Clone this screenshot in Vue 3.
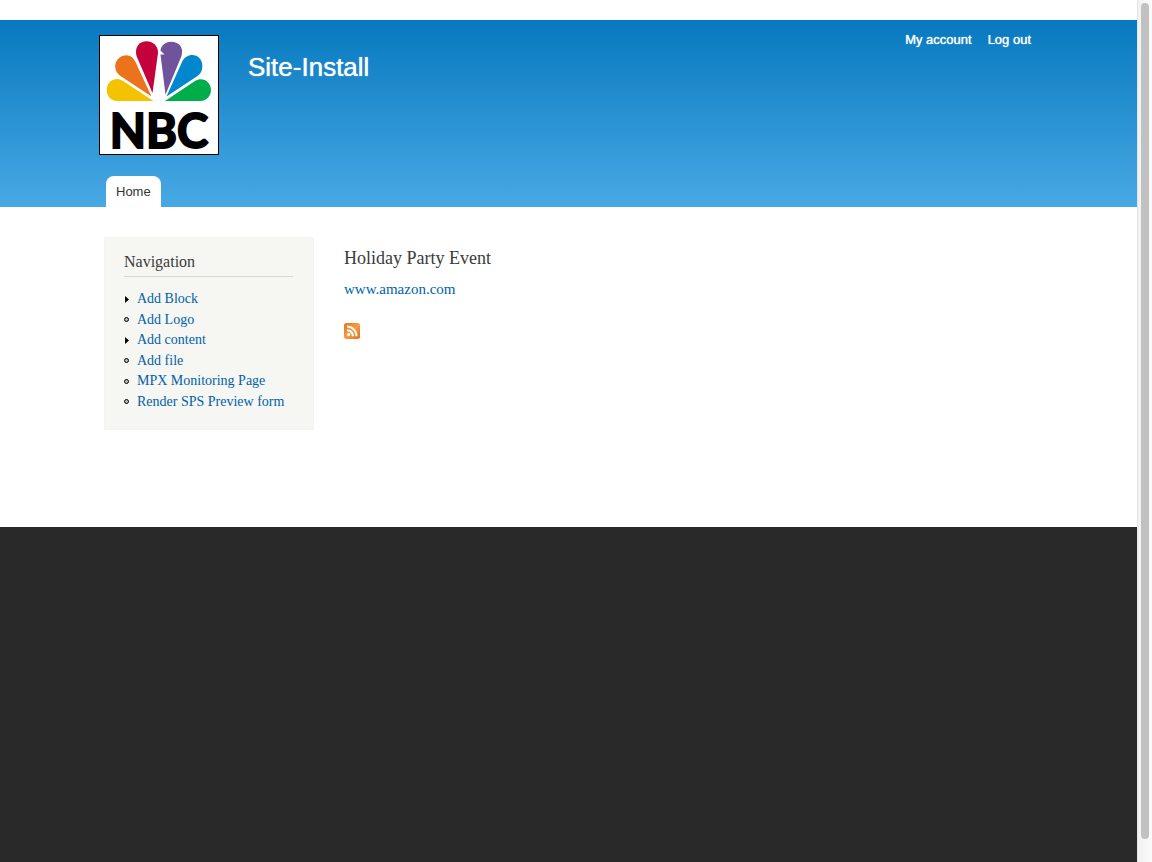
<script setup>
const links = [
  { label: 'Add Block', expandable: true },
  { label: 'Add Logo', expandable: false },
  { label: 'Add content', expandable: true },
  { label: 'Add file', expandable: false },
  { label: 'MPX Monitoring Page', expandable: false },
  { label: 'Render SPS Preview form', expandable: false },
]
</script>

<template>
  <div class="window">
    <div class="page">
      <header class="header">
        <div class="container">
          <div class="branding">
            <a class="logo" href="#" aria-label="Home page">
              <svg viewBox="0 0 118 118" width="118" height="118">
                <path fill="#f4c300" d="M53.5 65H17.5C3.500 65 3 43 17.500 43Q20 43 23 45Z" />
                <path fill="#ec731b" d="M51.500 60.500 20.500 40C10.500 32 16 19 27 19.200Q33 20 35.500 26Z" />
                <path fill="#c4003d" d="M52.500 57 36.500 20C32 0.800 58.500 0.800 58 17Z" />
                <path fill="#6f549d" d="M65.500 58.500 60.500 18.500H64.500L60.500 14.500C62 1.500 86.500 3 81.500 20Z" />
                <path fill="#0087ce" d="M66.500 60.500 82 26C88 14 103.500 19 102.300 31Q102 37 97.500 40Z" />
                <path fill="#00ad4b" d="M65 65 95 45C102.500 40 111 46 111 54C111 60 106.500 65 100 65Z" />
                <text class="wordmark" x="59" y="112" text-anchor="middle">NBC</text>
              </svg>
            </a>
            <h1 class="site-name"><a href="#">Site-Install</a></h1>
            <nav class="user-menu" aria-label="User menu">
              <a href="#">My account</a>
              <a href="#">Log out</a>
            </nav>
          </div>
          <nav class="tabs" aria-label="Main menu"><a href="#">Home</a></nav>
        </div>
      </header>

      <div class="container content">
        <aside class="sidebar">
          <h2>Navigation</h2>
          <ul>
            <li v-for="link in links" :key="link.label">
              <svg viewBox="0 0 5 7" width="5" height="7" aria-hidden="true">
                <path v-if="link.expandable" d="M1 0v7l4-3.5z" />
                <circle v-else cx="2.5" cy="3.5" r="2" fill="#bbb" stroke="#000" />
              </svg>
              <a href="#">{{ link.label }}</a>
            </li>
          </ul>
        </aside>
        <main class="main">
          <h2>Holiday Party Event</h2>
          <p><a href="#">www.amazon.com</a></p>
          <a class="feed" href="#" aria-label="Subscribe to feed">
            <svg viewBox="0 0 16 16" width="16" height="16">
              <defs>
                <linearGradient id="feed-fill" x1="0" y1="0" x2="1" y2="1">
                  <stop offset="0" stop-color="#e96f25" />
                  <stop offset=".5" stop-color="#f99b43" />
                  <stop offset="1" stop-color="#e06a22" />
                </linearGradient>
              </defs>
              <rect width="16" height="16" rx="2.5" fill="url(#feed-fill)" />
              <circle cx="4.6" cy="11.6" r="1.7" fill="#fff" />
              <path d="M3 7.2A5.900 5.900 0 0 1 8.900 13.200M3 3.600A9.500 9.500 0 0 1 12.500 13.200" fill="none" stroke="#fff" stroke-width="2" />
            </svg>
          </a>
        </main>
      </div>

      <footer class="footer"></footer>
    </div>
    <div class="scroll-track" aria-hidden="true"><div class="scroll-thumb"></div></div>
  </div>
</template>

<style>
body {
  margin: 0;
}
</style>

<style scoped>
.window {
  display: flex;
  min-height: 100vh;
  background: #fff;
  color: #3b3b3b;
  font-family: Georgia, "Liberation Serif", serif;
}
.page {
  flex: 1;
  display: flex;
  flex-direction: column;
  padding-top: 20px;
}
.container {
  box-sizing: border-box;
  width: 100%;
  max-width: 961px;
  margin: 0 auto;
}
a {
  color: #0062a8;
  text-decoration: none;
}
h1,
h2,
p,
ul {
  margin: 0;
  padding: 0;
  font-weight: normal;
}
.header {
  background: linear-gradient(#0779bf, #48a9e4);
  font-family: "Liberation Sans", Arial, sans-serif;
}
.branding {
  display: flex;
  align-items: flex-start;
  padding: 15px 18px 0 11px;
}
.logo {
  display: block;
  border: 1px solid #000;
  background: #fff;
}
.logo svg {
  display: block;
  overflow: visible;
}
.wordmark {
  font: 700 47px Lato, sans-serif;
  fill: #000;
  stroke: #000;
  stroke-width: 2px;
}
.site-name {
  margin: 16px 0 0 29px;
  font-size: 26px;
  line-height: 32px;
}
.site-name a,
.user-menu a {
  color: #fff;
  text-shadow: 0 0 1px #fff;
}
.user-menu {
  display: flex;
  gap: 16px;
  margin-left: auto;
  margin-top: -4px;
  font-size: 13px;
  line-height: 18px;
}
.tabs {
  display: flex;
  margin-top: 21px;
  padding-left: 18px;
}
.tabs a {
  padding: 0 10px;
  border-radius: 8px 8px 0 0;
  background: #fff;
  color: #333;
  font-size: 13px;
  line-height: 31px;
}
.content {
  display: flex;
  align-items: flex-start;
  gap: 30px;
  padding: 30px 16px 97px;
}
.sidebar {
  box-sizing: border-box;
  width: 210px;
  padding: 14px 20px 17px 19px;
  border: 1px solid #f4f4f0;
  background: #f6f6f2;
}
.sidebar h2 {
  padding-bottom: 5px;
  border-bottom: 1px solid #d6d6d6;
  font-size: 16px;
  line-height: 19px;
}
.sidebar ul {
  display: flex;
  flex-direction: column;
  justify-content: space-between;
  height: 123px;
  padding-top: 12px;
  list-style: none;
}
.sidebar li {
  display: flex;
  align-items: center;
  gap: 8px;
  font-size: 14px;
  line-height: 20px;
  white-space: nowrap;
}
.main {
  flex: 1;
  padding-top: 10px;
}
.main h2 {
  font-size: 18px;
  line-height: 22px;
}
.main p {
  margin: 10px 0 24px;
  font-size: 15px;
  line-height: 20px;
}
.feed {
  display: block;
  width: 16px;
}
.feed svg {
  display: block;
}
.footer {
  flex: 1;
  background: #292929;
}
.scroll-track {
  box-sizing: border-box;
  width: 15px;
  padding: 3px 3px 23px;
  display: flex;
  border-left: 1px solid #e4e4e4;
  background: linear-gradient(90deg, #f1f1f1, #fbfbfb);
}
.scroll-thumb {
  width: 8px;
  border-radius: 4px;
  background: #c1c1c1;
}
</style>
